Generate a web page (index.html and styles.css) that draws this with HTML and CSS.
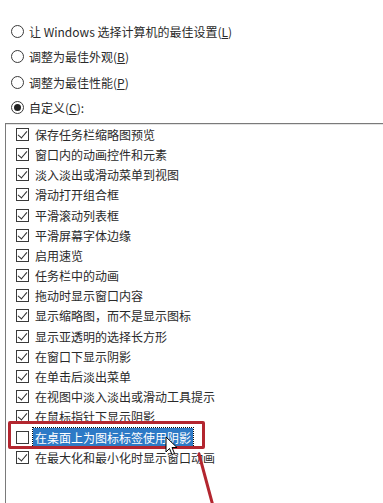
FILE: index.html
```html
<!DOCTYPE html>
<html lang="zh-CN">
<head>
<meta charset="utf-8">
<title>性能选项</title>
<link rel="stylesheet" href="styles.css">
</head>
<body>
<div class="page">
  <div class="options">
    <div class="radio-row"><span class="radio"></span><span class="label">让 Windows 选择计算机的最佳设置(<u>L</u>)</span></div>
    <div class="radio-row"><span class="radio"></span><span class="label">调整为最佳外观(<u>B</u>)</span></div>
    <div class="radio-row"><span class="radio"></span><span class="label">调整为最佳性能(<u>P</u>)</span></div>
    <div class="radio-row"><span class="radio on"></span><span class="label">自定义(<u>C</u>):</span></div>
  </div>
  <div class="listbox">
    <ul class="items">
      <li><span class="cb on"></span><span class="txt">保存任务栏缩略图预览</span></li>
      <li><span class="cb on"></span><span class="txt">窗口内的动画控件和元素</span></li>
      <li><span class="cb on"></span><span class="txt">淡入淡出或滑动菜单到视图</span></li>
      <li><span class="cb on"></span><span class="txt">滑动打开组合框</span></li>
      <li><span class="cb on"></span><span class="txt">平滑滚动列表框</span></li>
      <li><span class="cb on"></span><span class="txt">平滑屏幕字体边缘</span></li>
      <li><span class="cb on"></span><span class="txt">启用速览</span></li>
      <li><span class="cb on"></span><span class="txt">任务栏中的动画</span></li>
      <li><span class="cb on"></span><span class="txt">拖动时显示窗口内容</span></li>
      <li><span class="cb on"></span><span class="txt">显示缩略图，而不是显示图标</span></li>
      <li><span class="cb on"></span><span class="txt">显示亚透明的选择长方形</span></li>
      <li><span class="cb on"></span><span class="txt">在窗口下显示阴影</span></li>
      <li><span class="cb on"></span><span class="txt">在单击后淡出菜单</span></li>
      <li><span class="cb on"></span><span class="txt">在视图中淡入淡出或滑动工具提示</span></li>
      <li><span class="cb on"></span><span class="txt">在鼠标指针下显示阴影</span></li>
      <li class="selected"><span class="cb"></span><span class="txt">在桌面上为图标标签使用阴影</span></li>
      <li><span class="cb on"></span><span class="txt">在最大化和最小化时显示窗口动画</span></li>
    </ul>
  </div>

  <div class="callout"></div>
  <svg class="arrow" width="40" height="60" viewBox="0 0 40 60">
    <line x1="32" y1="60" x2="18" y2="8" stroke="#b3262f" stroke-width="3" stroke-linecap="round"/>
  </svg>
  <svg class="cursor" width="13" height="20" viewBox="0 0 13 20">
    <path d="M1 1 L1 16 L4.5 12.5 L7 18.5 L9.5 17.5 L7 11.5 L12 11.5 Z" fill="#fff" stroke="#000" stroke-width="1" stroke-linejoin="round"/>
  </svg>
</div>
</body>
</html>
```
FILE: styles.css
```css
* { box-sizing: border-box; }
html, body {
  margin: 0;
  padding: 0;
  background: #fff;
  overflow: hidden;
}
.page {
  position: relative;
  width: 383px;
  height: 503px;
  overflow: hidden;
  font-family: "Noto Sans CJK SC", "Noto Sans", sans-serif;
  font-size: 12px;
  color: #2a2a2a;
}
.options {
  padding-top: 19px;
  padding-left: 11px;
}
.radio-row {
  display: flex;
  align-items: center;
  height: 25.3px;
  gap: 5px;
}
.radio {
  width: 13px;
  height: 13px;
  border: 1px solid #3a3a3a;
  border-radius: 50%;
  background: #fff;
  position: relative;
  flex: none;
}
.radio.on::after {
  content: "";
  position: absolute;
  left: 2px;
  top: 2px;
  width: 7px;
  height: 7px;
  border-radius: 50%;
  background: #222;
}
.label u {
  text-decoration: underline;
  text-underline-offset: 1px;
}
.listbox {
  margin-top: 3px;
  margin-left: 5px;
  width: 420px;
  height: 400px;
  border-top: 1px solid #7a7a7a;
  border-left: 1px solid #7a7a7a;
  box-shadow: inset 0 1px 0 #e3e3e3;
}
.items {
  list-style: none;
  margin: 0;
  padding: 0 0 0 10px;
}
.items li {
  display: flex;
  align-items: center;
  height: 20.2px;
  gap: 6px;
}
.cb {
  width: 13px;
  height: 13px;
  border: 1px solid #3a3a3a;
  background: #fff;
  position: relative;
  flex: none;
}
.cb.on::after {
  content: "";
  position: absolute;
  left: 3px;
  top: 0px;
  width: 4px;
  height: 8px;
  border-right: 1.2px solid #2a2a2a;
  border-bottom: 1.2px solid #2a2a2a;
  transform: rotate(40deg);
}
.selected .txt {
  background: #2d7ac6;
  color: #fff;
  padding: 1px 2px;
  margin-left: -2px;
  outline: 1px dotted #0a0a0a;
  line-height: 17px;
}
.callout {
  position: absolute;
  left: 8px;
  top: 421px;
  width: 197px;
  height: 28px;
  border: 3px solid #b3262f;
  border-radius: 2px;
}
.arrow {
  position: absolute;
  left: 181px;
  top: 446px;
}
.cursor {
  position: absolute;
  left: 165px;
  top: 436px;
}
```
